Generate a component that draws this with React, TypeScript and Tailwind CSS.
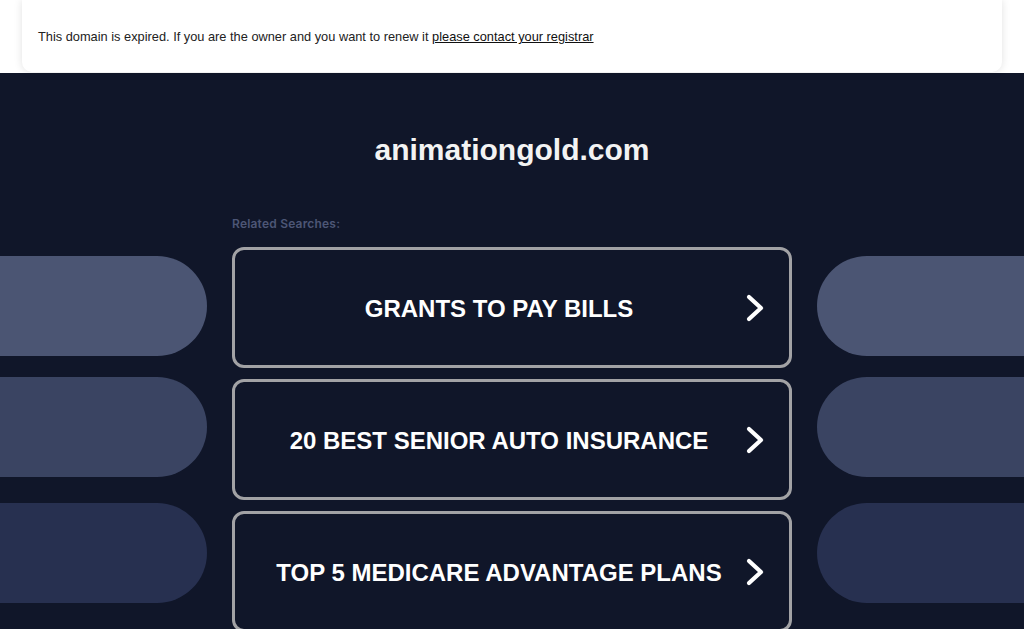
import React from "react";

const Chevron = () => (
  <svg width="24" height="30" viewBox="0 0 24 30" fill="none" aria-hidden="true">
    <path d="M6 4 L18 15 L6 26" stroke="#ffffff" strokeWidth="4.2" strokeLinecap="round" strokeLinejoin="round" />
  </svg>
);

const items = [
  "GRANTS TO PAY BILLS",
  "20 BEST SENIOR AUTO INSURANCE",
  "TOP 5 MEDICARE ADVANTAGE PLANS",
];

export default function App() {
  return (
    <div className="w-full h-[629px] overflow-hidden bg-[#101629]" style={{ fontFamily: '"Liberation Sans", Arial, sans-serif' }}>
      <div className="bg-white h-[73px] px-[22px]">
        <div className="h-[72px] bg-white rounded-b-[10px] shadow-[0_0_8px_rgba(0,0,0,0.12)] flex items-center pt-[2px] px-[16px] text-[12.8px] text-[#222]">
          <span>
            This domain is expired. If you are the owner and you want to renew it{" "}
            <a href="#" className="underline text-[#111]">please contact your registrar</a>
          </span>
        </div>
      </div>
      <div className="pt-[60px]">
        <h1 className="text-center text-[30px] leading-[34px] font-bold text-[#f3f3f3]">animationgold.com</h1>
        <div className="mt-[48px] flex gap-[25px]">
          <div className="flex-1 flex flex-col pt-[41px]">
            <div className="h-[100px] rounded-r-full bg-[#4b5573]" />
            <div className="h-[100px] mt-[21px] rounded-r-full bg-[#3a4462]" />
            <div className="h-[100px] mt-[26px] rounded-r-full bg-[#273050]" />
          </div>
          <div className="w-[560px] shrink-0">
            <div className="text-[12px] leading-[16px] pt-[1px] h-[16px] font-semibold tracking-[0.2px] text-[#4d5676] mb-[16px]" style={{ fontFamily: 'Inter, "Open Sans", sans-serif' }}>
              Related Searches:
            </div>
            <div className="flex flex-col gap-[11px]">
              {items.map((t) => (
                <a
                  key={t}
                  href="#"
                  className="relative h-[121px] border-[3px] border-[#a2a2a5] rounded-[12px] flex items-center justify-center pr-[26px] pt-[2px]"
                >
                  <span className="text-[24px] font-bold text-white">{t}</span>
                  <span className="absolute right-[22px] top-1/2 -translate-y-1/2 flex">
                    <Chevron />
                  </span>
                </a>
              ))}
            </div>
          </div>
          <div className="flex-1 flex flex-col pt-[41px]">
            <div className="h-[100px] rounded-l-full bg-[#4b5573]" />
            <div className="h-[100px] mt-[21px] rounded-l-full bg-[#3a4462]" />
            <div className="h-[100px] mt-[26px] rounded-l-full bg-[#273050]" />
          </div>
        </div>
      </div>
    </div>
  );
}
